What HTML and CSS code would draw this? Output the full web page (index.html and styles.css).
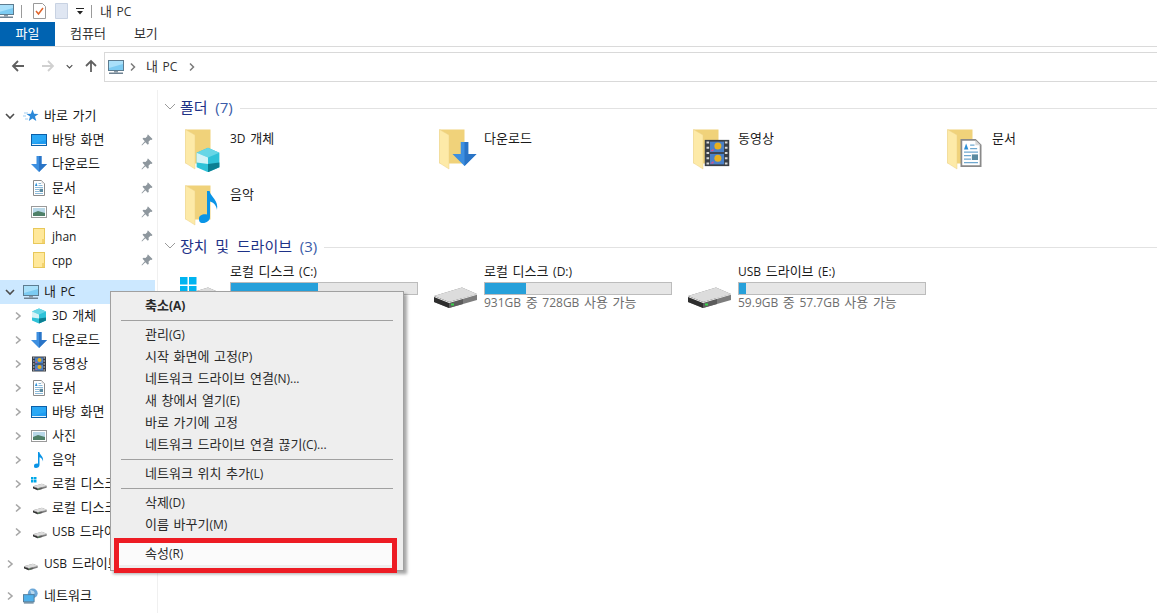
FILE: index.html
```html
<!DOCTYPE html>
<html lang="ko">
<head>
  <meta charset="UTF-8">
  <title>내 PC</title>
  <link rel="stylesheet" href="styles.css">
</head>
<body>
  <svg class="sprite" xmlns="http://www.w3.org/2000/svg">
    <symbol id="pc" viewBox="0 0 16 16">
      <rect x="0.5" y="1.5" width="15" height="10" fill="#7ccbf2" stroke="#5d7c90"/>
      <path d="M1 2h14v3L1 9z" fill="#a9e0fa"/>
      <rect x="6" y="12" width="4" height="1.5" fill="#8d9aa5"/>
      <rect x="1" y="13.5" width="14" height="1.5" fill="#6f8292"/>
    </symbol>
    <symbol id="desk" viewBox="0 0 16 16">
      <rect x="0.5" y="2.5" width="15" height="11" fill="#1e9bf0" stroke="#0b5fa8"/>
      <path d="M1 3h14v5L1 12z" fill="#2aa8f5"/>
      <rect x="1" y="12" width="14" height="1" fill="#e9f3fa"/>
    </symbol>
    <symbol id="down" viewBox="0 0 16 16">
      <path d="M5.500 0h5v8H16l-8 8-8-8h5.500z" fill="#3d8fe0"/>
      <path d="M8 0h2.500v8H16l-8 8z" fill="#2a74c6"/>
    </symbol>
    <symbol id="doc" viewBox="0 0 16 16">
      <path d="M2.500 0.500h8l3 3v12h-11z" fill="#fff" stroke="#8a8a8a"/>
      <path d="M10.500 0.500v3h3z" fill="#d8d8d8"/>
      <path d="M7.500 3.500h2.500M7.500 5.500h4M4 7.500h8M4 9.500h4M4 11.500h4M4 13.500h8" stroke="#6fa8cf" stroke-width="0.800"/>
      <path d="M4 6l1.200-3.500L6.500 6z" fill="#2b8ed6"/>
      <rect x="8.500" y="8.800" width="3.500" height="3.200" fill="#5a8aa0"/>
    </symbol>
    <symbol id="pic" viewBox="0 0 16 16">
      <rect x="0.500" y="2.500" width="15" height="11" fill="#fff" stroke="#9a9a9a"/>
      <rect x="2" y="4" width="12" height="8" fill="#b9d8e8"/>
      <path d="M2 9l5-2 7 2v3H2z" fill="#4f8068"/>
    </symbol>
    <symbol id="smallfolder" viewBox="0 0 16 16">
      <rect x="2.500" y="0.500" width="11" height="15" fill="#ffe89a" stroke="#e8c85a"/>
      <path d="M11 15v-4h2.500v4z" fill="#f3d36f"/>
    </symbol>
    <symbol id="pin" viewBox="0 0 12 12">
      <path d="M7 0.500l4.500 4.500-1 1-1-.3-2 2 .3 2-1 1-2.500-2.500L1 11.500.500 11l3.300-3.800-2.300-2.500 1-1 2 .3 2-2L6.300 1z" fill="#8e979e"/>
    </symbol>
    <symbol id="star" viewBox="0 0 16 16">
      <path d="M9.500 1.500l1.600 4.200 4.400.2-3.500 2.700 1.300 4.400-3.800-2.500-3.700 2.500 1.200-4.400-3.500-2.700 4.400-.2z" fill="#2b88d8"/>
      <path d="M1 5h4M0 8h3M2 11h3" stroke="#9fcdf0"/>
    </symbol>
    <symbol id="cube" viewBox="0 0 16 16">
      <path d="M8 0.500l7 3v9l-7 3-7-3v-9z" fill="#2fc2d8"/>
      <path d="M1 3.500l7 3 7-3-7-3z" fill="#67d6e6"/>
      <path d="M1 3.500l7 3v4l-7-1z" fill="#d4f3f7"/>
      <path d="M8 15.500v-5l7-1v3z" fill="#0b7f92"/>
    </symbol>
    <symbol id="film" viewBox="0 0 16 16">
      <rect x="1" y="0.500" width="14" height="15" fill="#3a3f46"/>
      <path d="M2 2h1.500M2 5h1.500M2 8h1.500M2 11h1.500M2 14h1.500M12.500 2H14M12.500 5H14M12.500 8H14M12.500 11H14M12.500 14H14" stroke="#d8d8d8" stroke-width="1.200"/>
      <rect x="4" y="1.500" width="8" height="6" fill="#4a80c8"/>
      <rect x="4" y="8.500" width="8" height="6" fill="#4a80c8"/>
      <circle cx="8.500" cy="4" r="2" fill="#e8b020"/>
      <circle cx="8.500" cy="11" r="2" fill="#e8b020"/>
      <path d="M4 7l2-1.500V7zM4 14l2-1.500V14z" fill="#d8508a"/>
    </symbol>
    <symbol id="note" viewBox="0 0 16 16">
      <path d="M7 0h1.300c.4 3 4.700 4.500 3.700 9.500-.3-2.500-1.800-3.800-3.500-4.300V13c0 1.800-1.700 3-3.500 3S3 15 3 13.700 4.700 11.300 7 11.700z" fill="#0a94e6"/>
    </symbol>
    <symbol id="hdd" viewBox="0 0 44 22">
      <path d="M0 9L28 0.500 43 7v6L15 21 0 15z" fill="#7d7d7d"/>
      <path d="M0 9L28 0.500 43 7 15 15z" fill="#dcdcdc"/>
      <path d="M0 9l15 6v6L0 15z" fill="#2e2e2e"/>
      <path d="M15 15l14-4v6l-14 4z" fill="#5c5c5c"/>
      <path d="M0 9l15 6 28-8v.800L15 16 0 10z" fill="#f2f2f2"/>
      <rect x="17" y="16.500" width="3" height="2" fill="#37d04a"/>
    </symbol>
    <symbol id="bigfolder" viewBox="0 0 26 42">
      <rect x="0.500" y="0.500" width="25" height="34" fill="#f0d27a"/>
      <path d="M0.500 0.500L10 6v34L0.500 34z" fill="#fdeaa8" stroke="#ecd38a" stroke-width="0.500"/>
    </symbol>
    <symbol id="globe" viewBox="0 0 18 18">
      <circle cx="11" cy="6" r="5.500" fill="#6ba7d8"/>
      <path d="M8 2c2 1 4 1 5 3s-3 3-4 1z" fill="#b8d8ee"/>
      <rect x="0.500" y="7.500" width="12" height="8" fill="#4fb0ea" stroke="#4f7896"/>
      <rect x="1" y="16" width="11" height="1.500" fill="#5f7f95"/>
    </symbol>
    <symbol id="chev" viewBox="0 0 10 10">
      <path d="M3 1.500L7 5l-4 3.500" fill="none" stroke="#a6a6a6" stroke-width="1.600"/>
    </symbol>
    <symbol id="chevaddr" viewBox="0 0 10 10">
      <path d="M3 1.500L6.500 5 3 8.500" fill="none" stroke="#7a7a7a" stroke-width="1.500"/>
    </symbol>
    <symbol id="chevd" viewBox="0 0 10 10">
      <path d="M1 3l4 4 4-4" fill="none" stroke="#4d4d4d" stroke-width="1.600"/>
    </symbol>
    <symbol id="chevhead" viewBox="0 0 12 10">
      <path d="M1 2l5 5 5-5" fill="none" stroke="#9a9a9a"/>
    </symbol>
    <symbol id="arrow" viewBox="0 0 14 14">
      <path d="M13 7H2M7 2L2 7l5 5" fill="none" stroke="currentColor" stroke-width="1.800"/>
    </symbol>
    <symbol id="arrowup" viewBox="0 0 14 14">
      <path d="M7 13V2M2 7l5-5 5 5" fill="none" stroke="#606060" stroke-width="1.800"/>
    </symbol>
  </svg>

  <div class="titlebar">
    <svg class="ico16 pc-title"><use href="#pc"/></svg>
    <span class="bar-sep"></span>
    <svg class="qa-icon" viewBox="0 0 13 16">
      <path d="M0.500 0.500h9l3 3v12H.500z" fill="#fff" stroke="#9a9a9a"/>
      <path d="M3 8l2.500 3L10 5" fill="none" stroke="#e0642a" stroke-width="1.500"/>
    </svg>
    <svg class="qa-icon" viewBox="0 0 13 16">
      <path d="M0.500 0.500h12v15H.500z" fill="#dfe6f2" stroke="#c8d2e2"/>
    </svg>
    <svg class="qa-drop" viewBox="0 0 8 8">
      <path d="M0 1h8v1H0zM1 4h6L4 7.500z" fill="#222"/>
    </svg>
    <span class="bar-sep"></span>
    <span class="title-text">내 <span class="lat">PC</span></span>
  </div>

  <div class="ribbon">
    <div class="tab file-tab">파일</div>
    <div class="tab tab-pc">컴퓨터</div>
    <div class="tab tab-view">보기</div>
  </div>

  <div class="addressrow">
    <svg class="nav back"><use href="#arrow"/></svg>
    <svg class="nav forward"><use href="#arrow"/></svg>
    <svg class="nav-drop"><use href="#chevd"/></svg>
    <svg class="nav up"><use href="#arrowup"/></svg>
    <div class="addressbox">
      <svg class="ico16"><use href="#pc"/></svg>
      <svg class="crumb-chev"><use href="#chevaddr"/></svg>
      <span class="crumb">내 <span class="lat">PC</span></span>
      <svg class="crumb-chev"><use href="#chevaddr"/></svg>
    </div>
  </div>

  <div class="main">
    <nav class="sidebar">
      <div class="row"><svg class="twist"><use href="#chevd"/></svg><svg class="ico16"><use href="#star"/></svg><span>바로 가기</span></div>
      <div class="row sub"><span class="twist"></span><svg class="ico16"><use href="#desk"/></svg><span>바탕 화면</span><svg class="pin"><use href="#pin"/></svg></div>
      <div class="row sub"><span class="twist"></span><svg class="ico16"><use href="#down"/></svg><span>다운로드</span><svg class="pin"><use href="#pin"/></svg></div>
      <div class="row sub"><span class="twist"></span><svg class="ico16"><use href="#doc"/></svg><span>문서</span><svg class="pin"><use href="#pin"/></svg></div>
      <div class="row sub"><span class="twist"></span><svg class="ico16"><use href="#pic"/></svg><span>사진</span><svg class="pin"><use href="#pin"/></svg></div>
      <div class="row sub"><span class="twist"></span><svg class="ico16"><use href="#smallfolder"/></svg><span class="lat">jhan</span><svg class="pin"><use href="#pin"/></svg></div>
      <div class="row sub"><span class="twist"></span><svg class="ico16"><use href="#smallfolder"/></svg><span class="lat">cpp</span><svg class="pin"><use href="#pin"/></svg></div>

      <div class="row selected group"><svg class="twist"><use href="#chevd"/></svg><svg class="ico16"><use href="#pc"/></svg><span>내 <span class="lat">PC</span></span></div>
      <div class="row sub"><svg class="twist"><use href="#chev"/></svg><svg class="ico16"><use href="#cube"/></svg><span><span class="lat">3D</span> 개체</span></div>
      <div class="row sub"><svg class="twist"><use href="#chev"/></svg><svg class="ico16"><use href="#down"/></svg><span>다운로드</span></div>
      <div class="row sub"><svg class="twist"><use href="#chev"/></svg><svg class="ico16"><use href="#film"/></svg><span>동영상</span></div>
      <div class="row sub"><svg class="twist"><use href="#chev"/></svg><svg class="ico16"><use href="#doc"/></svg><span>문서</span></div>
      <div class="row sub"><svg class="twist"><use href="#chev"/></svg><svg class="ico16"><use href="#desk"/></svg><span>바탕 화면</span></div>
      <div class="row sub"><svg class="twist"><use href="#chev"/></svg><svg class="ico16"><use href="#pic"/></svg><span>사진</span></div>
      <div class="row sub"><svg class="twist"><use href="#chev"/></svg><svg class="ico16"><use href="#note"/></svg><span>음악</span></div>
      <div class="row sub"><svg class="twist"><use href="#chev"/></svg>
        <svg class="ico16" viewBox="0 0 16 16">
          <path d="M0 1h2.500v2.500H0zM3 1h2.500v2.500H3zM0 4h2.500v2.500H0zM3 4h2.500v2.500H3z" fill="#00a8e8"/>
          <use href="#hdd" x="2" y="7" width="14" height="8"/>
        </svg><span>로컬 디스크 <span class="lat">(C:)</span></span></div>
      <div class="row sub"><svg class="twist"><use href="#chev"/></svg><svg class="ico16" viewBox="0 0 16 16"><use href="#hdd" x="2" y="7" width="14" height="8"/></svg><span>로컬 디스크 <span class="lat">(D:)</span></span></div>
      <div class="row sub"><svg class="twist"><use href="#chev"/></svg><svg class="ico16" viewBox="0 0 16 16"><use href="#hdd" x="2" y="7" width="14" height="8"/></svg><span><span class="lat">USB</span> 드라이브 <span class="lat">(E:)</span></span></div>

      <div class="row group"><svg class="twist"><use href="#chev"/></svg><svg class="ico16" viewBox="0 0 16 16"><use href="#hdd" x="1" y="7" width="14" height="8"/></svg><span><span class="lat">USB</span> 드라이브 <span class="lat">(E:)</span></span></div>
      <div class="row group"><svg class="twist"><use href="#chev"/></svg><svg class="ico16"><use href="#globe"/></svg><span>네트워크</span></div>
    </nav>

    <section class="content">
      <h2 class="group-head"><svg class="head-chev"><use href="#chevhead"/></svg><span>폴더 <em>(7)</em></span><i class="head-line"></i></h2>
      <div class="folders">
        <div class="folder">
          <svg class="folder-ico" viewBox="0 0 40 44"><use href="#bigfolder" y="1" width="26" height="42"/><use href="#cube" x="10" y="19" width="26" height="26"/></svg>
          <span><span class="lat">3D</span> 개체</span>
        </div>
        <div class="folder">
          <svg class="folder-ico" viewBox="0 0 40 44"><use href="#bigfolder" y="1" width="26" height="42"/><use href="#down" x="13" y="14" width="25" height="24"/></svg>
          <span>다운로드</span>
        </div>
        <div class="folder">
          <svg class="folder-ico" viewBox="0 0 40 44"><use href="#bigfolder" y="1" width="26" height="42"/><use href="#film" x="10" y="11" width="28" height="28"/></svg>
          <span>동영상</span>
        </div>
        <div class="folder">
          <svg class="folder-ico" viewBox="0 0 40 44"><use href="#bigfolder" y="1" width="26" height="42"/><use href="#doc" x="10" y="11" width="28" height="28"/></svg>
          <span>문서</span>
        </div>
        <div class="folder">
          <svg class="folder-ico" viewBox="0 0 40 44"><use href="#bigfolder" y="1" width="26" height="42"/><use href="#note" x="8" y="7" width="32" height="32"/></svg>
          <span>음악</span>
        </div>
      </div>

      <h2 class="group-head devices-head"><svg class="head-chev"><use href="#chevhead"/></svg><span>장치 및 드라이브 <em>(3)</em></span><i class="head-line"></i></h2>
      <div class="drives">
        <div class="drive">
          <svg class="drive-ico" viewBox="0 0 44 44">
            <path d="M0 0h7.500v7.500H0zM9 0h7.500v7.500H9zM0 9h7.500v7.500H0zM9 9h7.500v7.500H9z" fill="#00b4f0"/>
            <use href="#hdd" y="10" width="44" height="22"/>
          </svg>
          <div class="drive-info">
            <span>로컬 디스크 <span class="lat">(C:)</span></span>
            <div class="meter"><div class="meter-fill" style="width: 47%"></div></div>
          </div>
        </div>
        <div class="drive">
          <svg class="drive-ico" viewBox="0 0 44 44"><use href="#hdd" y="10" width="44" height="22"/></svg>
          <div class="drive-info">
            <span>로컬 디스크 <span class="lat">(D:)</span></span>
            <div class="meter"><div class="meter-fill" style="width: 22%"></div></div>
            <span class="free"><span class="lat">931GB</span> 중 <span class="lat">728GB</span> 사용 가능</span>
          </div>
        </div>
        <div class="drive">
          <svg class="drive-ico" viewBox="0 0 44 44"><use href="#hdd" y="10" width="44" height="22"/></svg>
          <div class="drive-info">
            <span><span class="lat">USB</span> 드라이브 <span class="lat">(E:)</span></span>
            <div class="meter"><div class="meter-fill" style="width: 4%"></div></div>
            <span class="free"><span class="lat">59.9GB</span> 중 <span class="lat">57.7GB</span> 사용 가능</span>
          </div>
        </div>
      </div>
    </section>
  </div>

  <div class="menu">
    <div class="item strong">축소<span class="lat">(A)</span></div>
    <hr>
    <div class="item">관리<span class="lat">(G)</span></div>
    <div class="item">시작 화면에 고정<span class="lat">(P)</span></div>
    <div class="item">네트워크 드라이브 연결<span class="lat">(N)...</span></div>
    <div class="item">새 창에서 열기<span class="lat">(E)</span></div>
    <div class="item">바로 가기에 고정</div>
    <div class="item">네트워크 드라이브 연결 끊기<span class="lat">(C)...</span></div>
    <hr>
    <div class="item">네트워크 위치 추가<span class="lat">(L)</span></div>
    <hr>
    <div class="item">삭제<span class="lat">(D)</span></div>
    <div class="item">이름 바꾸기<span class="lat">(M)</span></div>
    <hr class="blank">
    <div class="item hot">속성<span class="lat">(R)</span></div>
  </div>
  <div class="callout"></div>
</body>
</html>
```

FILE: styles.css
```css
html, body {
  margin: 0;
  padding: 0;
  width: 100%;
  height: 100%;
  overflow: hidden;
  background: #fff;
  color: #1a1a1a;
  font-family: "Noto Sans CJK KR", "Open Sans", sans-serif;
  font-size: 13px;
  line-height: 16px;
  word-spacing: 1px;
}
.lat {
  font-family: "Open Sans", sans-serif;
  font-size: 12px;
}
.sprite {
  display: none;
}
.ico16 {
  width: 16px;
  height: 16px;
  flex: none;
}

/* title bar */
.titlebar {
  display: flex;
  align-items: center;
  height: 22px;
}
.pc-title {
  margin-left: -2px;
}
.bar-sep {
  width: 1px;
  height: 13px;
  background: #9a9a9a;
  margin: 0 8px 0 7px;
}
.qa-icon {
  width: 13px;
  height: 16px;
  margin: 0 9px 0 3px;
}
.qa-icon + .qa-icon {
  margin: 0;
}
.qa-drop {
  width: 8px;
  height: 8px;
  margin-left: 8px;
}
.title-text {
  color: #333;
}

/* ribbon */
.ribbon {
  display: flex;
  height: 24px;
  border-bottom: 1px solid #dadada;
}
.tab {
  line-height: 21px;
  color: #333;
}
.file-tab {
  width: 55px;
  background: #0063b1;
  color: #fff;
  text-align: center;
}
.tab-pc {
  margin-left: 15px;
}
.tab-view {
  margin-left: 28px;
}

/* address row */
.addressrow {
  display: flex;
  align-items: center;
  height: 38px;
  margin-bottom: 5px;
}
.nav {
  width: 14px;
  height: 14px;
}
.back {
  margin-left: 11px;
  color: #606060;
}
.forward {
  margin-left: 16px;
  color: #d0d0d0;
  transform: scaleX(-1);
}
.nav-drop {
  width: 7px;
  height: 7px;
  margin-left: 11px;
}
.up {
  margin-left: 11px;
}
.addressbox {
  flex: 1;
  display: flex;
  align-items: center;
  height: 28px;
  margin: 1px -3px 0 6px;
  padding-left: 3px;
  border: 1px solid #d9d9d9;
}
.crumb {
  margin: 0 6px 0 8px;
  color: #333;
}
.crumb-chev {
  width: 10px;
  height: 10px;
  margin-left: 4px;
}

/* layout under the address row */
.main {
  display: flex;
  height: 523px;
}
.sidebar {
  width: 158px;
  flex: none;
  padding-top: 14px;
  box-sizing: border-box;
  border-right: 1px solid #f0f0f0;
  overflow: hidden;
}
.row {
  display: flex;
  align-items: center;
  height: 24px;
  margin-right: 2px;
  padding-left: 4px;
  white-space: nowrap;
}
.row > span {
  padding-bottom: 2px;
}
.row > span.lat {
  padding: 2px 0 0;
}
.row > .twist {
  padding: 0;
}
.row.sub {
  padding-left: 12px;
}
.row.group {
  margin-top: 8px;
}
.row.selected {
  background: #cce8ff;
}
.twist {
  width: 12px;
  height: 10px;
  flex: none;
  margin-right: 7px;
}
.row .ico16 {
  margin-right: 5px;
}
.pin {
  width: 12px;
  height: 12px;
  margin-left: auto;
  margin-right: 2px;
}

/* main pane */
.content {
  flex: 1;
  padding-top: 8px;
  min-width: 0;
}
.group-head {
  display: flex;
  align-items: center;
  height: 18px;
  margin: 0;
  padding-left: 6px;
  font-size: 15px;
  font-weight: 400;
  word-spacing: 3.500px;
  color: #1e3287;
  white-space: nowrap;
}
.group-head em {
  font-family: "Open Sans", sans-serif;
  font-style: normal;
  font-size: 15px;
  color: #3a5ba8;
}
.head-chev {
  width: 12px;
  height: 10px;
  margin-right: 4px;
}
.head-line {
  flex: 1;
  height: 1px;
  margin: 2px 0 0 7px;
  background: #e2e2e2;
}
.devices-head {
  margin-top: 3px;
}
.folders {
  display: grid;
  grid-template-columns: repeat(4, 254px);
  grid-auto-rows: 50px;
  row-gap: 6px;
  margin-top: 12px;
  padding-left: 27px;
}
.folder {
  display: flex;
}
.folder-ico {
  width: 40px;
  height: 44px;
  margin-right: 5px;
  flex: none;
}
.folder > span {
  margin-top: 2px;
}
.drives {
  display: grid;
  grid-template-columns: repeat(3, 254px);
  margin-top: 7px;
  padding-left: 22px;
}
.drive {
  display: flex;
}
.drive-ico {
  width: 44px;
  height: 44px;
  margin-top: 15px;
  margin-right: 6px;
  flex: none;
}
.drive-info {
  display: flex;
  flex-direction: column;
  width: 188px;
  margin-top: 1px;
}
.meter {
  height: 11px;
  margin-top: 2px;
  border: 1px solid #bcbcbc;
  background: #e6e6e6;
}
.meter-fill {
  height: 100%;
  background: #26a0da;
}
.free {
  margin-top: -1px;
  color: #6d6d6d;
}

/* context menu */
.menu {
  position: absolute;
  left: 110px;
  top: 291px;
  width: 292px;
  height: 275px;
  padding-top: 3px;
  background: #eeeeee;
  border: 1px solid #a0a0a0;
  box-shadow: 3px 3px 3px rgba(0, 0, 0, 0.35);
}
.item {
  height: 22px;
  line-height: 20px;
  padding-left: 34px;
  color: #2a2a2a;
  white-space: nowrap;
}
.item.strong {
  font-weight: 700;
}
.item.hot {
  background: #fbfbfb;
  margin: 0 10px 0 8px;
  padding-left: 26px;
}
.menu hr {
  height: 1px;
  margin: 3px 10px;
  border: 0;
  background: #a0a0a0;
}
.menu hr.blank {
  background: transparent;
}
.callout {
  position: absolute;
  left: 114px;
  top: 538px;
  width: 273px;
  height: 25px;
  border: 5px solid #ed1c24;
}
```
